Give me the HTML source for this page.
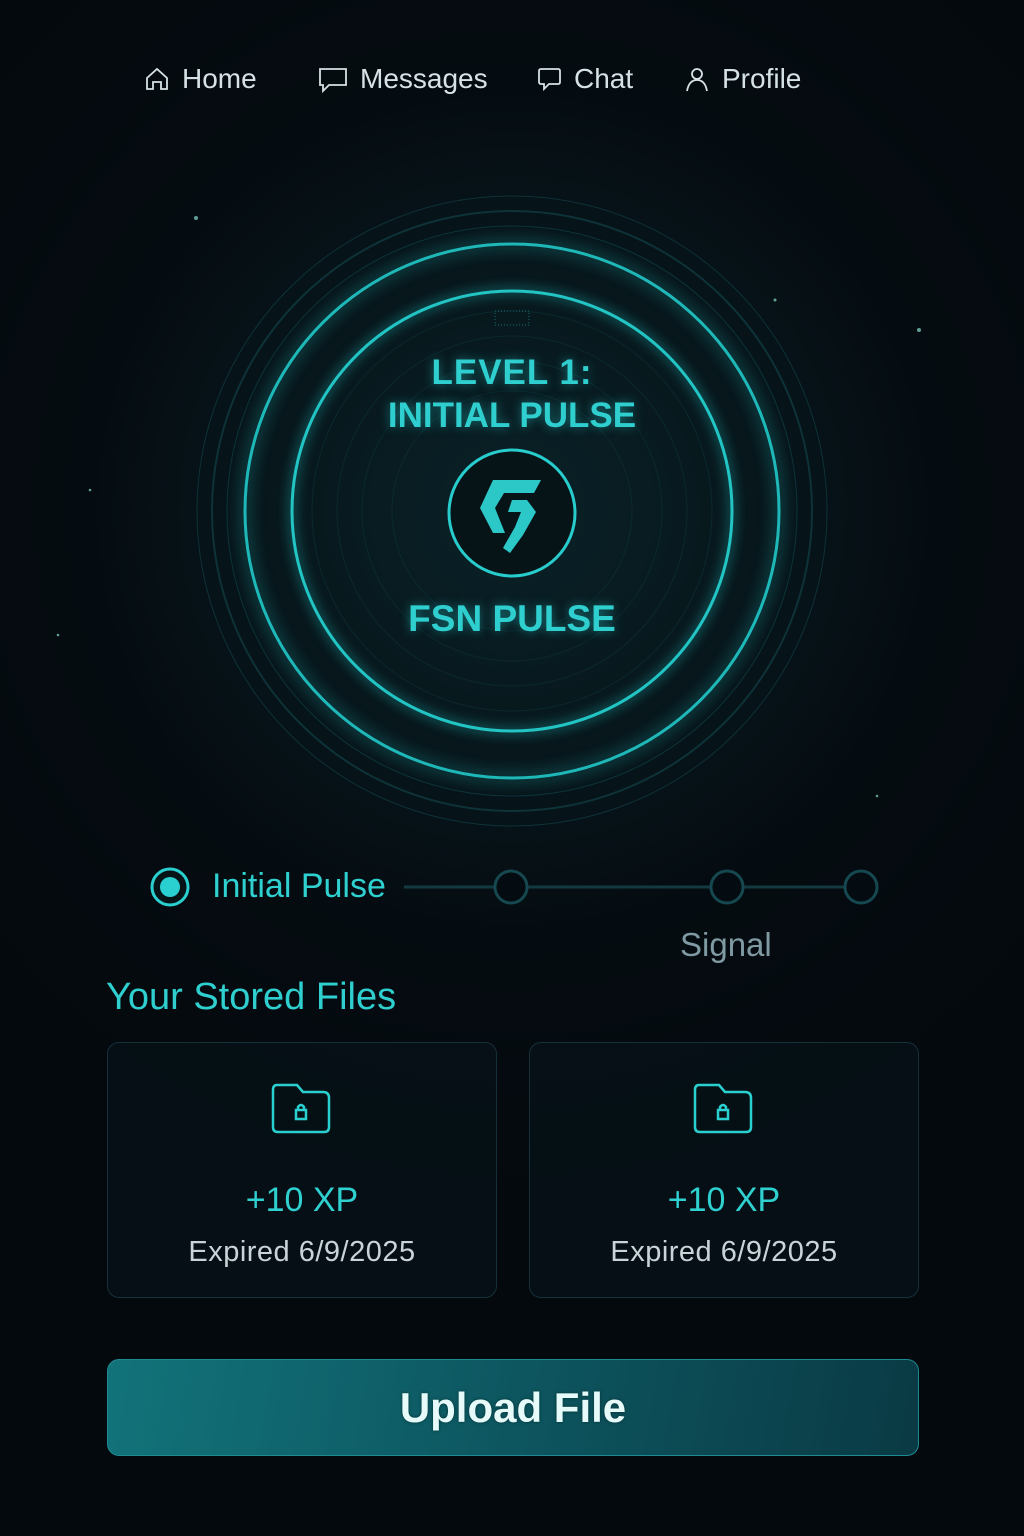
<!DOCTYPE html>
<html><head><meta charset="utf-8">
<style>
*{margin:0;padding:0;box-sizing:border-box}
body{width:1024px;height:1536px;background:#050b10;font-family:"Liberation Sans",sans-serif;position:relative;overflow:hidden}
.bg{position:absolute;inset:0;background:radial-gradient(circle at 512px 510px,#0a2228 0,#07161b 260px,#050c11 420px,#04090d 700px)}
.nav{position:absolute;top:63px;font-size:28px;color:#d6e2e6;display:flex;align-items:center}
.nav svg{margin-right:12px}
.t{position:absolute;left:0;width:1024px;text-align:center;color:#2fcfcf;font-weight:bold;text-shadow:0 0 10px rgba(40,210,210,.5)}
.card{position:absolute;top:1042px;width:390px;height:256px;border:1px solid #16303a;border-radius:12px;background:rgba(6,18,24,.8)}
.card .xp{position:absolute;top:138px;width:100%;text-align:center;font-size:34px;color:#2fd0d0}
.card .ex{position:absolute;top:193px;width:100%;text-align:center;font-size:29px;color:#c8d4d8;letter-spacing:0.5px}
.card svg{position:absolute;left:163px;top:40px}
</style></head><body>
<div class="bg"></div>
<div class="nav" style="left:144px"><svg width="26" height="26" viewBox="0 0 26 26" fill="none" stroke="#d6e2e6" stroke-width="1.8"><path d="M3 12L13 3l10 9v11h-6v-7h-8v7H3z"/></svg>Home</div>
<div class="nav" style="left:318px"><svg width="30" height="30" viewBox="0 0 30 30" fill="none" stroke="#d6e2e6" stroke-width="1.8"><path d="M2 5h26v16H11l-6 6v-6H2z"/></svg>Messages</div>
<div class="nav" style="left:537px"><svg width="25" height="26" viewBox="0 0 25 26" fill="none" stroke="#d6e2e6" stroke-width="1.8"><path d="M4 3h17q2 0 2 2v11q0 2-2 2H12l-5 5v-5H4q-2 0-2-2V5q0-2 2-2z"/></svg>Chat</div>
<div class="nav" style="left:684px"><svg width="26" height="26" viewBox="0 0 26 26" fill="none" stroke="#d6e2e6" stroke-width="1.8"><circle cx="13" cy="8" r="5"/><path d="M3 25q2-11 10-11t10 11"/></svg>Profile</div>

<svg style="position:absolute;left:0;top:0" width="1024" height="1536">
<g fill="none" stroke="#0d3238">
<circle cx="512" cy="511" r="315" stroke-width="1"/>
<circle cx="512" cy="511" r="300" stroke-width="2"/>
<circle cx="512" cy="511" r="285" stroke-width="1"/>
<circle cx="512" cy="511" r="200" stroke-width="1" opacity=".6"/>
<circle cx="512" cy="511" r="175" stroke-width="1" opacity=".6"/>
<circle cx="512" cy="511" r="150" stroke-width="1" opacity=".6"/>
<circle cx="512" cy="511" r="120" stroke-width="1" opacity=".6"/>
</g>
<circle cx="512" cy="511" r="267" fill="none" stroke="#1fb8b8" stroke-width="3" style="filter:drop-shadow(0 0 8px #1fc8c8)"/>
<circle cx="512" cy="511" r="220" fill="none" stroke="#22c4c4" stroke-width="3" style="filter:drop-shadow(0 0 6px #1fc8c8)"/>
<rect x="495" y="311" width="34" height="14" fill="none" stroke="#1a6a70" stroke-dasharray="1 2"/>
<circle cx="512" cy="513" r="63" fill="#061418" stroke="#28cccc" stroke-width="3"/>
<path d="M493 480H541L534 493H504L495 508L505 533H493L480 508Z" fill="#2cc8c8"/>
<path d="M512 500H527L536 512L523 535L510 553L503 548L515 527L521 512H508Z" fill="#2cc8c8"/>
<g fill="#9fe" opacity=".6"><circle cx="196" cy="218" r="2"/><circle cx="919" cy="330" r="2"/><circle cx="775" cy="300" r="1.5"/><circle cx="90" cy="490" r="1.3"/><circle cx="58" cy="635" r="1.3"/><circle cx="877" cy="796" r="1.3"/></g>
<line x1="404" y1="887" x2="850" y2="887" stroke="#123a40" stroke-width="3"/>
<circle cx="170" cy="887" r="18" fill="#061418" stroke="#2acfcf" stroke-width="3"/>
<circle cx="170" cy="887" r="10" fill="#2acfcf"/>
<g fill="#050c11" stroke="#154850" stroke-width="3"><circle cx="511" cy="887" r="16"/><circle cx="727" cy="887" r="16"/><circle cx="861" cy="887" r="16"/></g>
</svg>
<div class="t" style="top:353px;font-size:35px;letter-spacing:1px">LEVEL 1:</div>
<div class="t" style="top:396px;font-size:35px;letter-spacing:0">INITIAL PULSE</div>
<div class="t" style="top:598px;font-size:37px">FSN PULSE</div>
<div style="position:absolute;left:212px;top:867px;font-size:34px;color:#2fd0d0">Initial Pulse</div>
<div style="position:absolute;left:680px;top:926px;font-size:33px;color:#7f9aa2">Signal</div>
<div style="position:absolute;left:106px;top:976px;font-size:38px;color:#2fcfcf">Your Stored Files</div>
<div class="card" style="left:107px"><svg width="60" height="52" viewBox="0 0 60 52" fill="none" stroke="#2ad0d0" stroke-width="2.5"><path d="M6 2h20l6 7h20q6 0 6 6v29q0 5-5 5H7q-5 0-5-5V7q0-5 4-5z"/><rect x="25" y="27" width="10" height="9"/><path d="M27 27v-3q3-4 6 0v3"/></svg><div class="xp">+10 XP</div><div class="ex">Expired 6/9/2025</div></div>
<div class="card" style="left:529px"><svg width="60" height="52" viewBox="0 0 60 52" fill="none" stroke="#2ad0d0" stroke-width="2.5"><path d="M6 2h20l6 7h20q6 0 6 6v29q0 5-5 5H7q-5 0-5-5V7q0-5 4-5z"/><rect x="25" y="27" width="10" height="9"/><path d="M27 27v-3q3-4 6 0v3"/></svg><div class="xp">+10 XP</div><div class="ex">Expired 6/9/2025</div></div>
<div style="position:absolute;left:107px;top:1359px;width:812px;height:97px;border-radius:12px;border:1px solid #1e8a92;background:linear-gradient(100deg,#12737a,#0d5660 50%,#0a3a44);display:flex;align-items:center;justify-content:center;font-size:42px;font-weight:bold;color:#e6fafa;text-shadow:0 0 3px #033">Upload File</div>
</body></html>
